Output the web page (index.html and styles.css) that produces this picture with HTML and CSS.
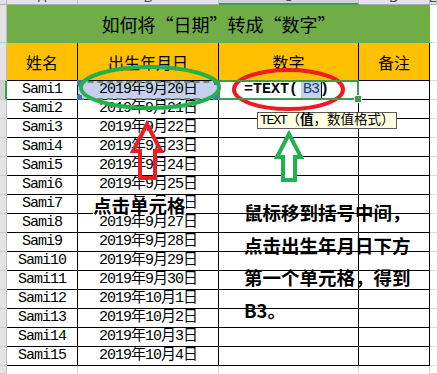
FILE: index.html
```html
<!DOCTYPE html>
<html lang="zh-CN">
<head>
<meta charset="utf-8">
<title>如何将日期转成数字</title>
<link rel="stylesheet" href="styles.css">
</head>
<body>
<div class="page">
  <div class="sheet">
    <div class="ch"></div>
    <div class="ch"><span>A</span></div>
    <div class="ch"><span>B</span></div>
    <div class="ch sel"><span>C</span></div>
    <div class="ch"><span>D</span></div>
    <div class="ch"><span>E</span></div>

    <div class="rh"></div>
    <div class="title">如何将“日期”转成“数字”</div>
    <div class="e"></div>

    <div class="rh"></div>
    <div class="hd">姓名</div>
    <div class="hd">出生年月日</div>
    <div class="hd">数字</div>
    <div class="hd">备注</div>
    <div class="e"></div>

    <div class="rh sel"></div>
    <div class="c">Sami1</div>
    <div class="c ref">2019年9月20日</div>
    <div class="c active"><span class="fx">=TEXT(</span><span class="refbox">B3</span><span class="caret"></span><span class="fx">)</span></div>
    <div class="c"></div>
    <div class="e"></div>

    <div class="rh"></div><div class="c">Sami2</div><div class="c">2019年9月21日</div><div class="c"></div><div class="c"></div><div class="e"></div>
    <div class="rh"></div><div class="c">Sami3</div><div class="c">2019年9月22日</div><div class="c"></div><div class="c"></div><div class="e"></div>
    <div class="rh"></div><div class="c">Sami4</div><div class="c">2019年9月23日</div><div class="c"></div><div class="c"></div><div class="e"></div>
    <div class="rh"></div><div class="c">Sami5</div><div class="c">2019年9月24日</div><div class="c"></div><div class="c"></div><div class="e"></div>
    <div class="rh"></div><div class="c">Sami6</div><div class="c">2019年9月25日</div><div class="c"></div><div class="c"></div><div class="e"></div>
    <div class="rh"></div><div class="c">Sami7</div><div class="c">2019年9月26日</div><div class="c"></div><div class="c"></div><div class="e"></div>
    <div class="rh"></div><div class="c">Sami8</div><div class="c">2019年9月27日</div><div class="c"></div><div class="c"></div><div class="e"></div>
    <div class="rh"></div><div class="c">Sami9</div><div class="c">2019年9月28日</div><div class="c"></div><div class="c"></div><div class="e"></div>
    <div class="rh"></div><div class="c">Sami10</div><div class="c">2019年9月29日</div><div class="c"></div><div class="c"></div><div class="e"></div>
    <div class="rh"></div><div class="c">Sami11</div><div class="c">2019年9月30日</div><div class="c"></div><div class="c"></div><div class="e"></div>
    <div class="rh"></div><div class="c">Sami12</div><div class="c">2019年10月1日</div><div class="c"></div><div class="c"></div><div class="e"></div>
    <div class="rh"></div><div class="c">Sami13</div><div class="c">2019年10月2日</div><div class="c"></div><div class="c"></div><div class="e"></div>
    <div class="rh"></div><div class="c">Sami14</div><div class="c">2019年10月3日</div><div class="c"></div><div class="c"></div><div class="e"></div>
    <div class="rh"></div><div class="c">Sami15</div><div class="c">2019年10月4日</div><div class="c"></div><div class="c"></div><div class="e"></div>

    <div class="rh"></div><div class="f"></div><div class="f"></div><div class="f"></div><div class="f"></div><div class="e"></div>
  </div>

  <svg class="marks" width="437" height="374" viewBox="0 0 437 374">
    <ellipse cx="150" cy="87.5" rx="69" ry="20.5" fill="none" stroke="#22b14c" stroke-width="4"/>
    <ellipse cx="288.5" cy="89.5" rx="54.5" ry="19.5" fill="none" stroke="#ed1c24" stroke-width="4"/>
    <polygon points="147,124 133,151 140,151 140,178 155,178 155,151 161,151" fill="none" stroke="#ed1c24" stroke-width="4"/>
    <polygon points="289,134 277,157 283,157 283,180 295,180 295,157 301,157" fill="#fff" stroke="#22b14c" stroke-width="4"/>
  </svg>

  <div class="tip"><span class="fn">TEXT</span>（<b>值</b>，数值格式）</div>

  <div class="note-left">点击单元格</div>
  <div class="note-right">
    <div>鼠标移到括号中间，</div>
    <div>点击出生年月日下方</div>
    <div>第一个单元格，得到</div>
    <div>B3。</div>
  </div>
</div>
</body>
</html>
```
FILE: styles.css
```css
* { box-sizing: border-box; margin: 0; padding: 0; }
html, body { width: 437px; height: 374px; overflow: hidden; background: #fff; }
body { font-family: "Liberation Mono", "Noto Sans CJK SC", monospace; color: #000; }

.page { position: relative; width: 437px; height: 374px; overflow: hidden; }

.sheet {
  display: grid;
  grid-template-columns: 7px 71px 141px 140px 71px 7px;
  grid-template-rows: 5px 38px 38px repeat(15, 19px) 8px;
}

/* column headers (letters cut off at top) */
.ch {
  background: #e3e3e3;
  border-right: 1px solid #bdbdbd;
  border-bottom: 1px solid #ababab;
  overflow: hidden;
  display: flex;
  align-items: flex-end;
  justify-content: center;
  font: 13px/12px "Liberation Sans", sans-serif;
  color: #444;
}
.ch span { display: block; line-height: 12px; }
.ch.sel { background: #d2d2d2; border-bottom: 2px solid #3f9c4c; }

/* row headers */
.rh {
  background: #e3e3e3;
  border-right: 1px solid #bdbdbd;
  border-bottom: 1px solid #cacaca;
}
.rh.sel { background: #d2d2d2; border-right: 2px solid #3f9c4c; }

.title {
  grid-column: 2 / 6;
  background: #70ad47;
  display: flex;
  align-items: center;
  justify-content: center;
  font-family: "Noto Sans CJK SC", sans-serif;
  font-size: 18px;
}

.hd {
  background: #ffc000;
  border-right: 1px solid #000;
  border-bottom: 1px solid #000;
  display: flex;
  align-items: center;
  justify-content: center;
  font-family: "Noto Sans CJK SC", sans-serif;
  font-size: 16px;
}

.c {
  border-right: 1px solid #000;
  border-bottom: 1px solid #000;
  display: flex;
  align-items: center;
  justify-content: center;
  font-size: 15px;
  letter-spacing: -1px;
  white-space: nowrap;
  line-height: 18px;
}

.e { border-bottom: 1px solid #dadada; }
.f { border-right: 1px solid #d4d4d4; }

/* referenced cell B3 */
.c.ref {
  position: relative;
  background: #c6d0ee;
  outline: 2px dashed #5e9468;
  outline-offset: -2px;
}
.c.ref::before {
  content: "";
  position: absolute;
  inset: -1px -1px -1px -1px;
  background:
    linear-gradient(#4472c4, #4472c4) left top / 5px 5px no-repeat,
    linear-gradient(#4472c4, #4472c4) right top / 5px 5px no-repeat,
    linear-gradient(#4472c4, #4472c4) left bottom / 5px 5px no-repeat,
    linear-gradient(#4472c4, #4472c4) right bottom / 5px 5px no-repeat;
}

/* active formula cell C3 */
.c.active {
  position: relative;
  z-index: 2;
  justify-content: flex-start;
  padding-left: 25px;
  letter-spacing: 0;
}
.c.active::before {
  content: "";
  position: absolute;
  inset: -1px -1px -1px -1px;
  border: 2px solid #3f9c4c;
}
.c.active::after {
  content: "";
  position: absolute;
  right: -4px;
  bottom: -4px;
  width: 6px;
  height: 6px;
  background: #3f9c4c;
  border: 1px solid #fff;
}
.fx { font-weight: bold; }
.refbox {
  display: inline-block;
  margin-left: 3px;
  padding: 0 2px;
  height: 18px;
  line-height: 18px;
  background: #c6d0ee;
  color: #23386e;
  letter-spacing: -1px;
}
.caret { display: inline-block; width: 1px; height: 16px; background: #000; margin-right: -2px; }

.marks { position: absolute; left: 0; top: 0; pointer-events: none; }

.tip {
  position: absolute;
  left: 257px;
  top: 112px;
  height: 17px;
  padding: 0 2px;
  background: #ffffe1;
  border: 1px solid #5a5a5a;
  font-size: 13.5px;
  line-height: 15px;
  white-space: nowrap;
}
.tip .fn { letter-spacing: -1.5px; }
.tip b { font-weight: bold; }

.note-left {
  position: absolute;
  left: 93px;
  top: 197px;
  background: #fff;
  font-family: "Noto Sans CJK SC", sans-serif;
  font-weight: bold;
  font-size: 18.5px;
  line-height: 17px;
  white-space: nowrap;
}
.note-right {
  position: absolute;
  left: 244px;
  top: 196px;
  font-family: "Noto Sans CJK SC", sans-serif;
  font-weight: bold;
  font-size: 18.5px;
  line-height: 32.5px;
  white-space: nowrap;
}
```
